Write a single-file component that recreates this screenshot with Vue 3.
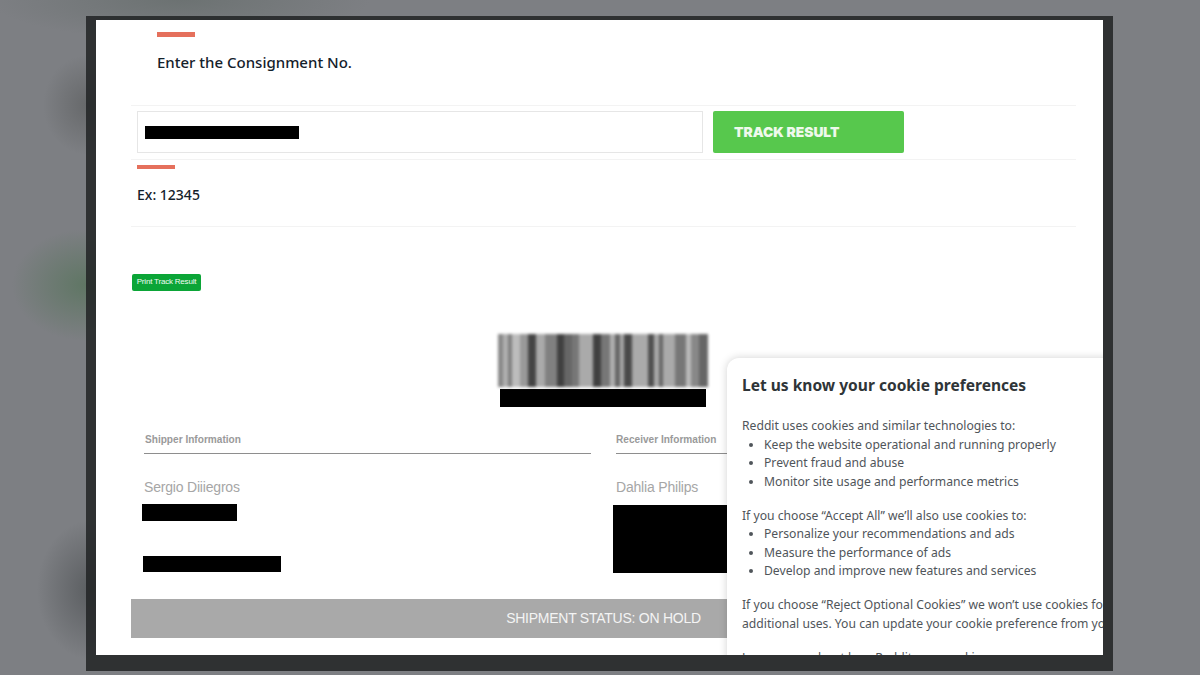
<script setup>
const bars = [
  [15, '#888'], [15, '#b0b0b0'], [12, '#808080'], [25, '#bdbdbd'], [24, '#999'], [24, '#444'],
  [27, '#aaa'], [36, '#808080'], [22, '#404040'], [23, '#666'], [22, '#777'], [42, '#aaa'],
  [23, '#404040'], [27, '#777'], [15, '#b0b0b0'], [15, '#666'], [13, '#aaa'], [23, '#4a4a4a'],
  [47, '#aaa'], [20, '#505050'], [15, '#aaa'], [12, '#666'], [36, '#aaa'], [32, '#777'],
  [15, '#bbb'], [25, '#888'], [25, '#666']
]
const allowed = [
  'Keep the website operational and running properly',
  'Prevent fraud and abuse',
  'Monitor site usage and performance metrics'
]
const accepted = [
  'Personalize your recommendations and ads',
  'Measure the performance of ads',
  'Develop and improve new features and services'
]
</script>

<template>
  <div class="stage">
    <div class="frame">
      <main class="page">
        <div class="content">
          <header class="head">
            <div class="accent accent-top"></div>
            <h1 class="heading">Enter the Consignment No.</h1>
          </header>

          <form class="track-row" @submit.prevent>
            <div class="track-input"><span class="redact redact-input"></span></div>
            <button class="track-btn" type="button">TRACK RESULT</button>
          </form>

          <section class="example">
            <div class="accent"></div>
            <p class="example-text">Ex: 12345</p>
          </section>

          <button class="print-btn" type="button">Print Track Result</button>

          <div class="barcode-block">
            <div class="barcode">
              <span
                v-for="(bar, i) in bars"
                :key="i"
                class="bar"
                :style="{ flexGrow: bar[0], background: bar[1] }"
              ></span>
            </div>
            <span class="redact redact-code"></span>
          </div>

          <div class="parties">
            <section class="party">
              <h2 class="party-label">Shipper Information</h2>
              <p class="party-name">Sergio Diiiegros</p>
              <span class="redact redact-s1"></span>
              <span class="redact redact-s2"></span>
            </section>
            <section class="party">
              <h2 class="party-label">Receiver Information</h2>
              <p class="party-name">Dahlia Philips</p>
              <span class="redact redact-r1"></span>
            </section>
          </div>

          <div class="status">SHIPMENT STATUS: ON HOLD</div>
        </div>

        <aside class="cookie">
          <h3 class="cookie-title">Let us know your cookie preferences</h3>
          <p class="cookie-p">Reddit uses cookies and similar technologies to:</p>
          <ul class="cookie-list">
            <li v-for="item in allowed" :key="item">{{ item }}</li>
          </ul>
          <p class="cookie-p">If you choose “Accept All” we’ll also use cookies to:</p>
          <ul class="cookie-list">
            <li v-for="item in accepted" :key="item">{{ item }}</li>
          </ul>
          <p class="cookie-p">If you choose “Reject Optional Cookies” we won’t use cookies for these<br />additional uses. You can update your cookie preference from your settings.</p>
          <p class="cookie-p cookie-learn">Learn more about how Reddit uses cookies.</p>
        </aside>
      </main>
    </div>
  </div>
</template>

<style>
html, body { margin: 0; padding: 0; background: #7d7f83; }
</style>

<style scoped>
* { box-sizing: border-box; }
.stage {
  width: 1200px;
  height: 675px;
  overflow: hidden;
  padding: 16px 87px 4px 86px;
  background:
    radial-gradient(ellipse 74px 56px at 86px 285px, #5f7664 0%, rgba(95, 118, 100, 0.5) 50%, rgba(95, 118, 100, 0) 100%),
    radial-gradient(ellipse 45px 50px at 88px 105px, #66686a 0%, rgba(102, 104, 106, 0) 100%),
    radial-gradient(ellipse 55px 70px at 92px 590px, #5a5d60 0%, rgba(90, 93, 96, 0) 100%),
    radial-gradient(ellipse 190px 40px at 180px 0, #6c7272 0%, rgba(108, 114, 114, 0) 100%),
    #7d7f83;
}
.frame {
  height: 655px;
  padding: 4px 10px 16px;
  background: rgba(33, 35, 37, 0.85);
}
.page {
  position: relative;
  height: 635px;
  overflow: hidden;
  background: #fff;
}
.content {
  padding: 0 27px 0 35px;
}
.accent {
  width: 38px;
  height: 4px;
  background: #e5705c;
}
.accent-top {
  height: 5px;
}
.head {
  padding: 12px 0 0 26px;
  border-bottom: 1px solid #f3f3f3;
}
.heading {
  margin: 15px 0 33px;
  font: 500 15px/20px "Noto Sans", sans-serif;
  color: #14212b;
}
.track-row {
  display: flex;
  gap: 10px;
  margin: 0;
  padding: 5px 6px 6px;
  border-bottom: 1px solid #f3f3f3;
}
.track-input {
  display: flex;
  align-items: center;
  width: 566px;
  height: 42px;
  padding-left: 7px;
  border: 1px solid #e6e6e6;
  background: #fff;
}
.redact {
  display: block;
  background: #000;
}
.redact-input {
  width: 154px;
  height: 13px;
}
.track-btn {
  width: 191px;
  height: 42px;
  padding: 0 0 0 21px;
  border: 0;
  border-radius: 2px;
  background: #57c84d;
  color: #eef9ec;
  font: 900 13.8px/42px Inter, sans-serif;
  text-align: left;
}
.example {
  padding: 5px 0 0 6px;
  border-bottom: 1px solid #f3f3f3;
}
.example-text {
  margin: 16px 0 21px;
  font: 500 14px/20px "Noto Sans", sans-serif;
  color: #14212b;
}
.print-btn {
  display: block;
  width: 69px;
  height: 17px;
  margin: 47px 0 0 1px;
  padding: 0 0 2px;
  border: 0;
  border-radius: 2px;
  background: #0ba537;
  color: #f2fbf4;
  font: 400 8px/12px "Liberation Sans", sans-serif;
  letter-spacing: -0.2px;
  text-align: center;
}
.barcode-block {
  display: flex;
  flex-direction: column;
  align-items: center;
  gap: 2px;
  margin-top: 43px;
  padding-right: 2px;
}
.barcode {
  display: flex;
  width: 210px;
  height: 53px;
  filter: blur(1.8px);
}
.bar {
  flex-basis: 0;
  height: 100%;
}
.redact-code {
  width: 206px;
  height: 18px;
}
.parties {
  display: grid;
  grid-template-columns: 447px 447px;
  column-gap: 25px;
  padding-left: 13px;
  margin-top: 24px;
}
.party-label {
  margin: 0;
  padding: 1px 0 5px 1px;
  border-bottom: 1px solid #8e8e8e;
  font: 700 10.1px/16px "Liberation Sans", sans-serif;
  color: #9a9a9a;
}
.party + .party .party-label {
  padding-left: 0;
}
.party-name {
  margin: 25px 0 0;
  font: 400 14px/17px "Liberation Sans", sans-serif;
  letter-spacing: -0.19px;
  color: #a6a6a6;
}
.redact-s1 {
  width: 95px;
  height: 17px;
  margin: 8px 0 0 -2px;
}
.redact-s2 {
  width: 138px;
  height: 16px;
  margin: 35px 0 0 -1px;
}
.redact-r1 {
  width: 200px;
  height: 68px;
  margin: 9px 0 0 -3px;
}
.status {
  height: 39px;
  margin-top: 26px;
  background: #a9a9a9;
  color: #f4f4f4;
  font: 400 14px/38px "Liberation Sans", sans-serif;
  letter-spacing: -0.25px;
  text-align: center;
}
.cookie {
  position: absolute;
  left: 631px;
  top: 338px;
  width: 520px;
  height: 340px;
  padding: 17px 15px 0;
  border-radius: 12px 0 0 0;
  background: #fff;
  box-shadow: 0 0 8px rgba(0, 0, 0, 0.18);
  font-family: "Noto Sans", sans-serif;
  color: #50555a;
}
.cookie-title {
  margin: 0 0 22px;
  font: 700 15.55px/20px "Noto Sans", sans-serif;
  color: #2f3538;
}
.cookie-p {
  margin: 0;
  font-size: 12.17px;
  line-height: 18.6px;
  white-space: nowrap;
}
.cookie-list {
  margin: 0 0 15.3px;
  padding: 0 0 0 22px;
  font-size: 12.17px;
  line-height: 18.6px;
}
.cookie-learn {
  margin-top: 15px;
}
</style>
